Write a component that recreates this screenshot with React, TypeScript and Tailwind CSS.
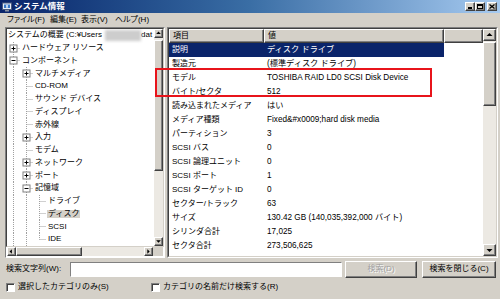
import React from "react";

type TreeNode = {
  label: React.ReactNode;
  level: number;
  exp?: "+" | "-";
  last?: boolean;
  sel?: boolean;
};

const tree: TreeNode[] = [
  { label: "ハードウェア リソース", level: 1, exp: "+" },
  { label: "コンポーネント", level: 1, exp: "-" },
  { label: "マルチメディア", level: 2, exp: "+" },
  { label: "CD-ROM", level: 2 },
  { label: "サウンド デバイス", level: 2 },
  { label: "ディスプレイ", level: 2 },
  { label: "赤外線", level: 2 },
  { label: "入力", level: 2, exp: "+" },
  { label: "モデム", level: 2 },
  { label: "ネットワーク", level: 2, exp: "+" },
  { label: "ポート", level: 2, exp: "+" },
  { label: "記憶域", level: 2, exp: "-" },
  { label: "ドライブ", level: 3 },
  { label: "ディスク", level: 3, sel: true },
  { label: "SCSI", level: 3 },
  { label: "IDE", level: 3, last: true },
];

const rows: [string, string][] = [
  ["説明", "ディスク ドライブ"],
  ["製造元", "(標準ディスク ドライブ)"],
  ["モデル", "TOSHIBA RAID LD0 SCSI Disk Device"],
  ["バイト/セクタ", "512"],
  ["読み込まれたメディア", "はい"],
  ["メディア種類", "Fixed&#x0009;hard disk media"],
  ["パーティション", "3"],
  ["SCSI バス", "0"],
  ["SCSI 論理ユニット", "0"],
  ["SCSI ポート", "1"],
  ["SCSI ターゲット ID", "0"],
  ["セクター/トラック", "63"],
  ["サイズ", "130.42 GB (140,035,392,000 バイト)"],
  ["シリンダ合計", "17,025"],
  ["セクタ合計", "273,506,625"],
];

const raised =
  "border border-t-white border-l-white border-r-[#404040] border-b-[#404040] shadow-[inset_-1px_-1px_0_#808080]";
const sunken =
  "border border-t-[#808080] border-l-[#808080] border-r-white border-b-white";

function Arrow({ dir, className }: { dir: "up" | "down" | "left" | "right"; className: string }) {
  const pts = {
    up: "1.5,5 4.5,2 7.5,5",
    down: "1.5,3 4.5,6 7.5,3",
    left: "5,1.5 2,4.5 5,7.5",
    right: "3,1.5 6,4.5 3,7.5",
  }[dir];
  return (
    <div className={`${raised} bg-[#d4d0c8] flex items-center justify-center shrink-0 ${className}`}>
      <svg width="9" height="9" viewBox="0 0 9 9">
        <polygon points={pts} fill="#000" />
      </svg>
    </div>
  );
}

function Cell({ kind, exp }: { kind: "pass" | "tee" | "end"; exp?: "+" | "-" }) {
  return (
    <svg width="13" height="13" viewBox="0 0 13 13" className="shrink-0">
      {kind !== "end" && <line x1="6.5" y1="0" x2="6.5" y2="13" stroke="#a0a0a0" strokeDasharray="1 1" />}
      {kind === "end" && <line x1="6.5" y1="0" x2="6.5" y2="6.5" stroke="#a0a0a0" strokeDasharray="1 1" />}
      {kind !== "pass" && (
        <line x1="6.5" y1="6.5" x2="13" y2="6.5" stroke="#a0a0a0" strokeDasharray="1 1" />
      )}
      {exp && (
        <g>
          <rect x="3" y="3" width="7" height="7" fill="#fff" stroke="#808080" strokeWidth="1" />
          <line x1="4.5" y1="6.5" x2="8.5" y2="6.5" stroke="#000" />
          {exp === "+" && <line x1="6.5" y1="4.5" x2="6.5" y2="8.5" stroke="#000" />}
        </g>
      )}
    </svg>
  );
}

function TitleButton({ children }: { children: React.ReactNode }) {
  return (
    <div className={`${raised} w-[10px] h-[9px] bg-[#d4d0c8] flex items-center justify-center`}>
      {children}
    </div>
  );
}

export default function App() {
  return (
    <div className="relative w-[500px] h-[299px] overflow-hidden bg-[#d4d0c8] flex flex-col text-[8px] leading-none text-black font-['Liberation_Sans','Noto_Sans_CJK_JP',sans-serif]">
      {/* title bar */}
      <div className="h-[13px] shrink-0 flex items-center bg-linear-to-r from-[#0a246a] via-[#3a6ea5] to-[#a6caf0] pl-[2px] pr-[3px]">
        <svg width="10" height="10" viewBox="0 0 10 10" className="shrink-0">
          <rect x="0.5" y="1" width="9" height="6.5" fill="#e8eef8" stroke="#4a5a80" />
          <rect x="2" y="2.5" width="6" height="3.5" fill="#3a78c8" />
          <rect x="3" y="8" width="4" height="1.5" fill="#8890a0" />
          <rect x="4.3" y="2.8" width="1.4" height="3" fill="#fff" />
        </svg>
        <span className="ml-[2px] text-white font-bold text-[8.5px]">システム情報</span>
        <div className="ml-auto flex items-center">
          <TitleButton>
            <div className="w-[4px] h-[1.5px] bg-black mt-[3px]" />
          </TitleButton>
          <TitleButton>
            <div className="w-[6px] h-[5px] border border-black border-t-2" />
          </TitleButton>
          <div className="ml-[2px]">
            <TitleButton>
              <svg width="6" height="5" viewBox="0 0 6 5">
                <path d="M0.5 0.5 L5.5 4.5 M5.5 0.5 L0.5 4.5" stroke="#000" strokeWidth="1.3" />
              </svg>
            </TitleButton>
          </div>
        </div>
      </div>

      {/* menu */}
      <div className="h-[14px] shrink-0 flex items-center pl-[7px] whitespace-nowrap [font-feature-settings:'palt']">
        <span className="w-[43px]">ファイル(F)</span>
        <span className="w-[31px]">編集(E)</span>
        <span className="w-[34px]">表示(V)</span>
        <span>ヘルプ(H)</span>
      </div>

      {/* panels */}
      <div className="h-[231px] shrink-0 flex pl-[5px] gap-[2px]">
        {/* tree */}
        <div className={`w-[160px] flex flex-col bg-white ${sunken}`}>
          <div className="flex-1 flex border border-t-[#404040] border-l-[#404040] border-r-[#d4d0c8] border-b-[#d4d0c8] min-h-0">
            <div className="flex-1 flex flex-col overflow-hidden">
              <div className="h-[12.75px] shrink-0 flex items-center pl-[1px] whitespace-nowrap">
                <span>システムの概要 (C:¥Users</span>
                <span className="ml-[3px] w-[36px] h-[11px] bg-[#cdcdcd] blur-[1.5px] shrink-0" />
                <span>dat</span>
              </div>
              {tree.map((n, i) => (
                <div key={i} className="h-[12.75px] shrink-0 flex items-center whitespace-nowrap">
                  {n.level >= 2 && <Cell kind="pass" />}
                  {n.level >= 3 && <Cell kind="pass" />}
                  <Cell kind={n.last ? "end" : "tee"} exp={n.exp} />
                  <span className={`ml-[1px] px-[1px] ${n.sel ? "bg-[#d4d0c8]" : ""}`}>{n.label}</span>
                </div>
              ))}
            </div>
            <div className="w-[9px] flex flex-col bg-[#ece9e3]">
              <Arrow dir="up" className="h-[9px] w-[9px]" />
              <div className="h-[2px]" />
              <div className={`${raised} h-[131px] bg-[#d4d0c8]`} />
              <div className="flex-1" />
              <Arrow dir="down" className="h-[9px] w-[9px]" />
            </div>
          </div>
          <div className="h-[9px] shrink-0 flex bg-[#ece9e3] mx-[1px] mb-[1px]">
            <Arrow dir="left" className="w-[9px] h-[9px]" />
            <div className={`${raised} w-[66px] bg-[#d4d0c8]`} />
            <div className="flex-1" />
            <Arrow dir="right" className="w-[9px] h-[9px]" />
            <div className="w-[10px] bg-[#d4d0c8]" />
          </div>
        </div>

        {/* list */}
        <div className={`w-[331px] flex bg-white ${sunken}`}>
          <div className="flex-1 flex border border-t-[#404040] border-l-[#404040] border-r-[#d4d0c8] border-b-[#d4d0c8] min-h-0">
            <div className="flex-1 flex flex-col overflow-hidden">
              <div className="h-[14px] shrink-0 flex">
                <div className={`${raised} w-[95px] bg-[#d4d0c8] flex items-center pl-[3px]`}>項目</div>
                <div className={`${raised} w-[180px] bg-[#d4d0c8] flex items-center pl-[3px]`}>値</div>
                <div className={`${raised} flex-1 bg-[#d4d0c8]`} />
              </div>
              {rows.map(([k, v], i) => (
                <div key={i} className="h-[14px] shrink-0 flex items-center whitespace-nowrap">
                  <div
                    className={`w-[275px] h-full flex items-center ${i === 0 ? "bg-[#0a246a] text-white" : ""}`}
                  >
                    <span className="w-[95px] pl-[3px]">{k}</span>
                    <span className="pl-[3px] text-[8.2px]">{v}</span>
                  </div>
                </div>
              ))}
            </div>
            <div className="w-[13px] flex flex-col bg-[#ece9e3]">
              <Arrow dir="up" className="h-[12px] w-[13px]" />
              <div className="h-[1px]" />
              <div className={`${raised} h-[64px] bg-[#d4d0c8]`} />
              <div className="flex-1" />
              <Arrow dir="down" className="h-[12px] w-[13px]" />
            </div>
          </div>
        </div>
      </div>

      {/* search */}
      <div className="h-[22px] shrink-0 flex items-center pl-[6px]">
        <span className="w-[64px]">検索文字列(W):</span>
        <div className="w-[272px] h-[15px] bg-white border border-t-[#808080] border-l-[#808080] border-r-white border-b-white" />
        <div
          className={`${raised} ml-[3px] w-[72px] h-[17px] flex items-center justify-center text-[#a0a0a0] [text-shadow:1px_1px_0_#fff]`}
        >
          検索(D)
        </div>
        <div className={`${raised} ml-[5px] w-[74px] h-[17px] flex items-center justify-center`}>
          検索を閉じる(C)
        </div>
      </div>

      {/* checkboxes */}
      <div className="h-[14px] shrink-0 flex items-center pl-[6px]">
        <div className="w-[145px] flex items-center gap-[3px]">
          <div className="w-[9px] h-[9px] bg-white border border-t-[#808080] border-l-[#808080] border-r-white border-b-white shadow-[inset_1px_1px_0_#404040]" />
          <span>選択したカテゴリのみ(S)</span>
        </div>
        <div className="flex items-center gap-[3px]">
          <div className="w-[9px] h-[9px] bg-white border border-t-[#808080] border-l-[#808080] border-r-white border-b-white shadow-[inset_1px_1px_0_#404040]" />
          <span>カテゴリの名前だけ検索する(R)</span>
        </div>
      </div>

      {/* annotation */}
      <div className="absolute left-[155px] top-[68px] w-[277px] h-[29px] border-2 border-[#e8141b]" />
    </div>
  );
}
